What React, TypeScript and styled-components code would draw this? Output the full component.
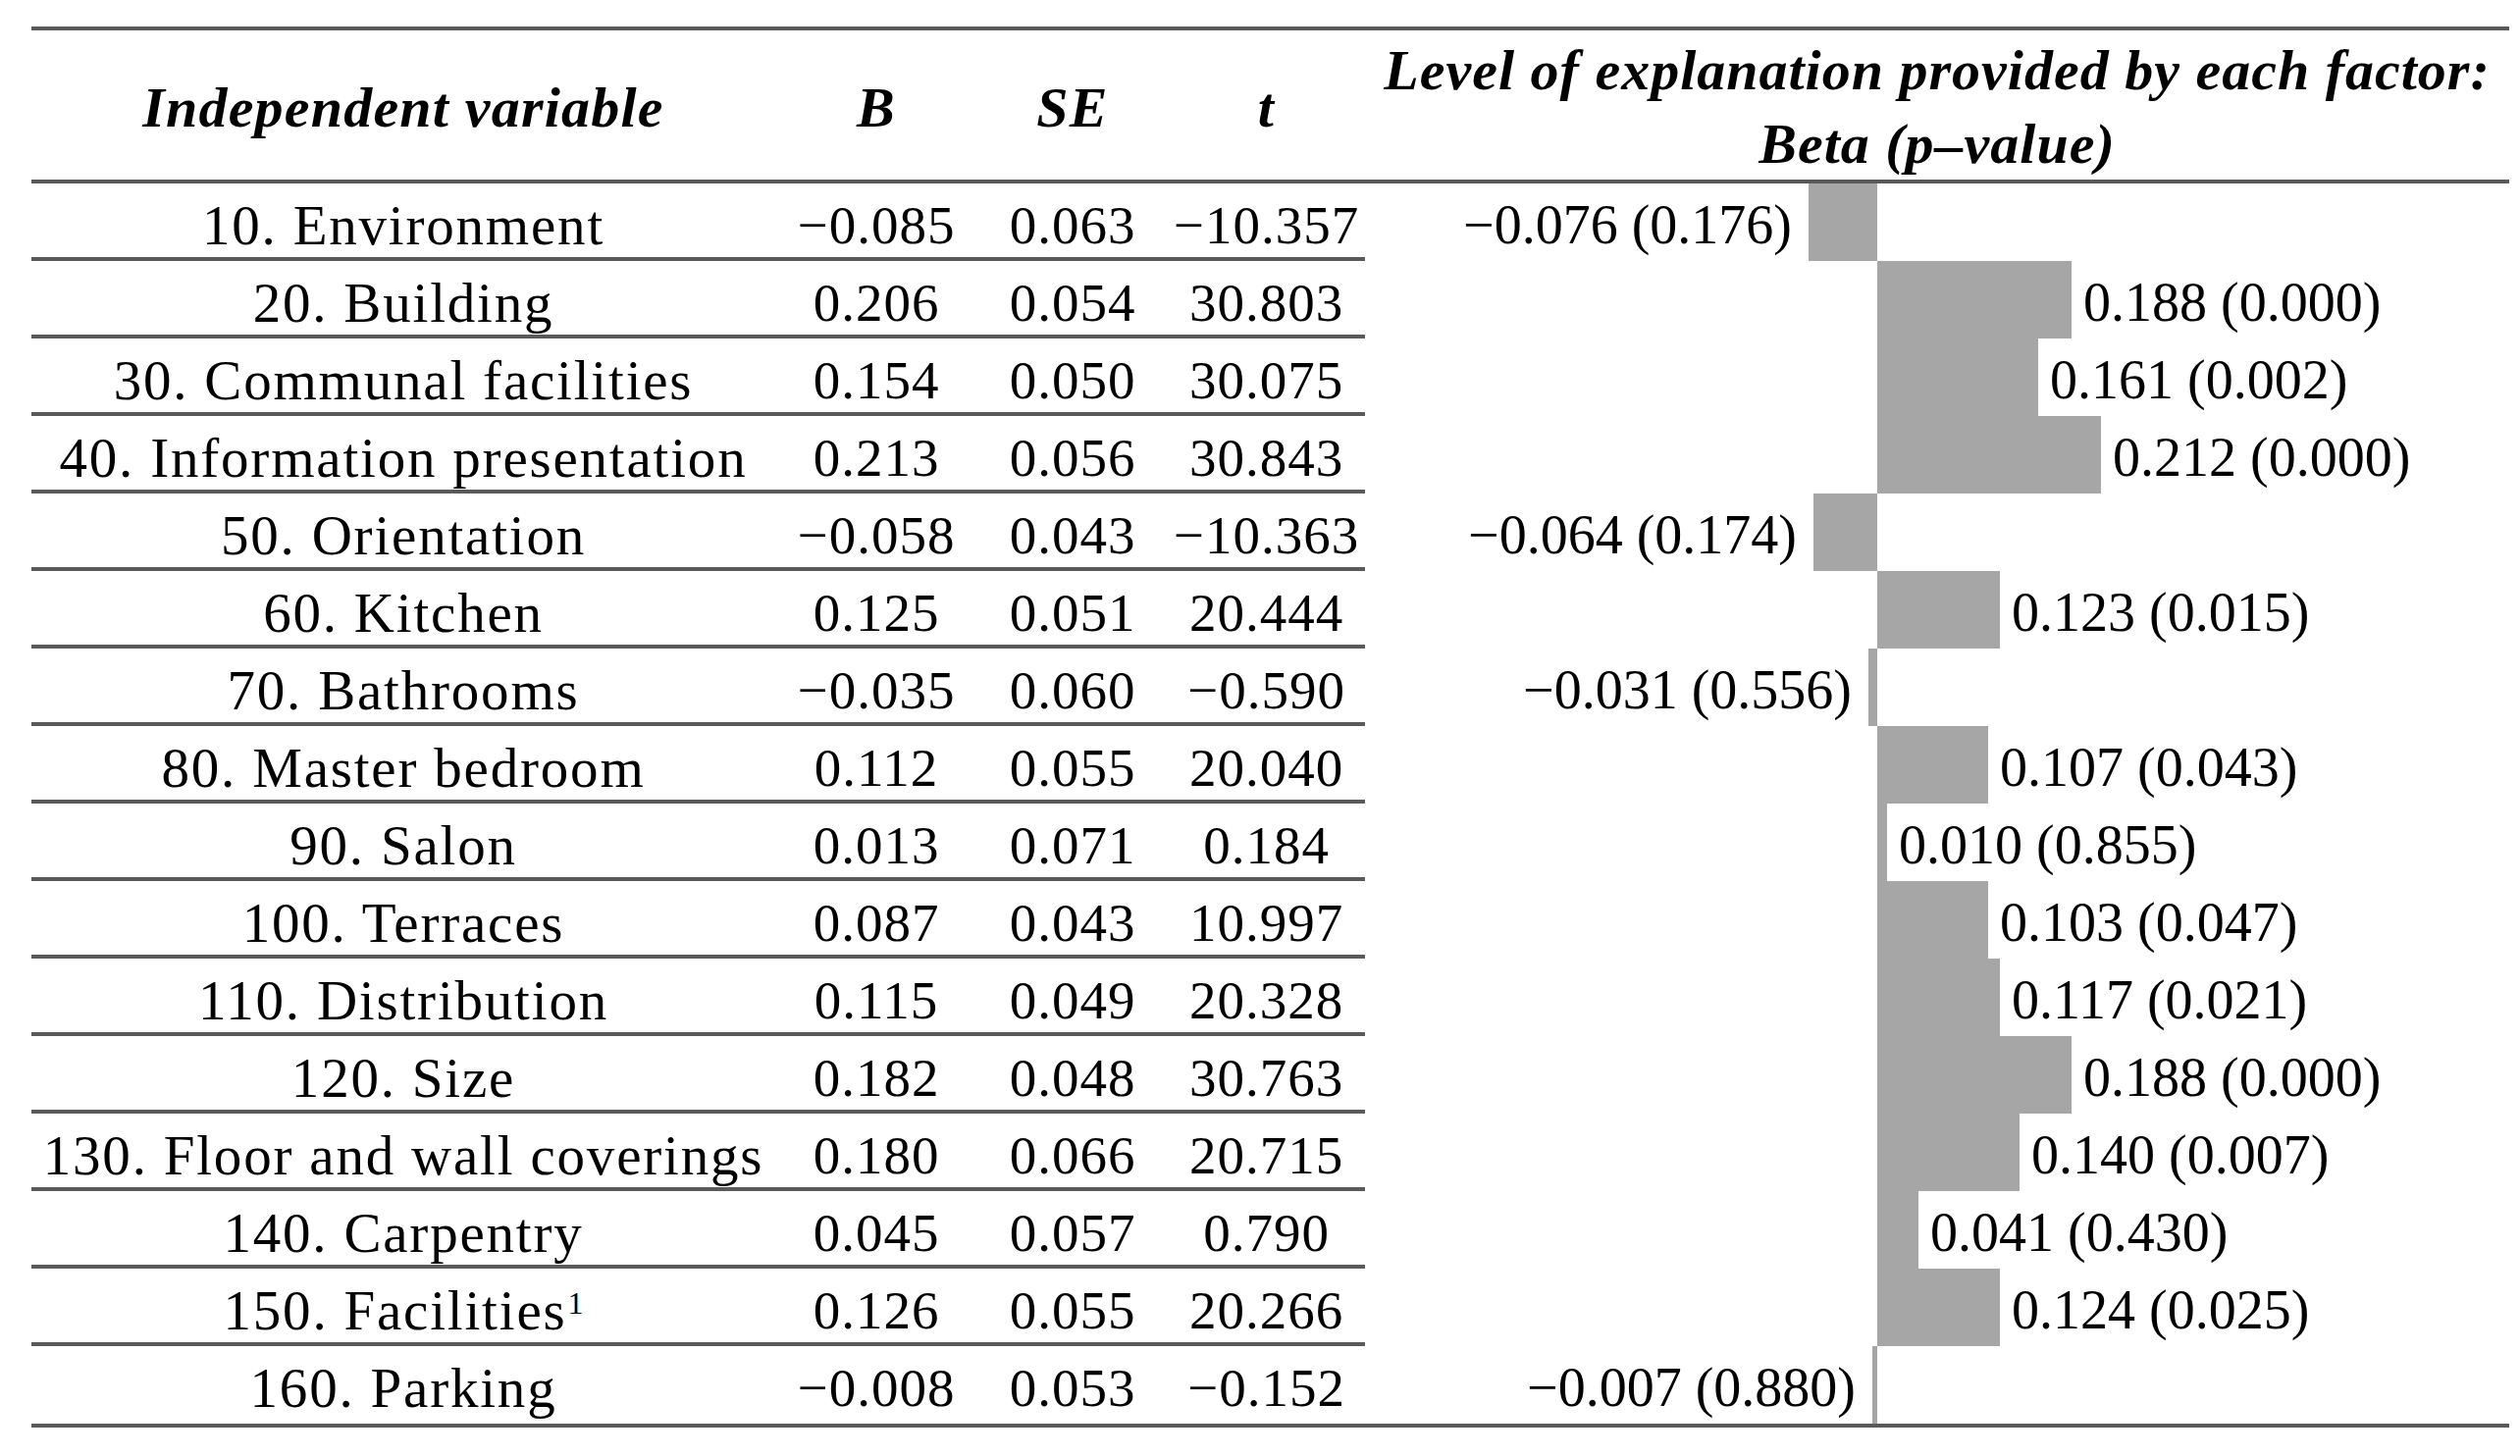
import React from "react";
import styled, { createGlobalStyle } from "styled-components";

const GlobalStyle = createGlobalStyle`
  html, body {
    margin: 0;
    padding: 0;
    background: #ffffff;
  }
  body {
    font-family: "Liberation Serif", "Times New Roman", serif;
    color: #000000;
  }
`;

const RULE = "#5a5a5a";
const COLS = "758px 206px 194px 201px 1166px";

const Page = styled.div`
  padding: 27px 11px 29px 32px;
`;

const Table = styled.div`
  width: 2525px;
  border-top: 4px solid ${RULE};
  border-bottom: 4px solid ${RULE};
`;

const HeaderRow = styled.div`
  display: grid;
  grid-template-columns: ${COLS};
  height: 156px;
  box-sizing: border-box;
  border-bottom: 4px solid ${RULE};
`;

const HeadCell = styled.div`
  display: flex;
  align-items: center;
  justify-content: center;
  padding-top: 4px;
  box-sizing: border-box;
  font-size: 58px;
  font-weight: bold;
  font-style: italic;
  letter-spacing: 1.2px;
  white-space: nowrap;
`;

const HeadStack = styled.div`
  display: flex;
  flex-direction: column;
  align-items: center;
  padding-top: 3px;
  font-size: 58px;
  font-weight: bold;
  font-style: italic;
  letter-spacing: 1px;
  line-height: 75px;
  white-space: nowrap;
`;

const BodyRow = styled.div`
  display: grid;
  grid-template-columns: ${COLS};
  height: 79px;
`;

const Cell = styled.div<{ $last?: boolean; $name?: boolean }>`
  display: flex;
  align-items: center;
  justify-content: center;
  box-sizing: border-box;
  padding-top: 10px;
  border-bottom: 4px solid ${(p) => (p.$last ? "transparent" : RULE)};
  font-size: ${(p) => (p.$name ? "57px" : "55px")};
  letter-spacing: ${(p) => (p.$name ? "1.8px" : "1px")};
  white-space: nowrap;
`;

const NameText = styled.span`
  display: inline-block;
`;

const Sup = styled.sup`
  font-size: 32px;
  letter-spacing: 0;
  vertical-align: 16px;
  line-height: 0;
  margin-left: 1px;
`;

const ChartCell = styled.div`
  display: flex;
  height: 79px;
`;

const NegSide = styled.div`
  width: 522px;
  display: flex;
  justify-content: flex-end;
  align-items: stretch;
`;

const PosSide = styled.div`
  flex: 1;
  display: flex;
  justify-content: flex-start;
  align-items: stretch;
`;

const Bar = styled.div`
  background: #a6a6a6;
  flex: none;
`;

const BarLabel = styled.div<{ $side: "neg" | "pos" }>`
  display: flex;
  align-items: center;
  padding-top: 5px;
  box-sizing: border-box;
  font-size: 56px;
  white-space: nowrap;
  margin-right: ${(p) => (p.$side === "neg" ? "17px" : "0")};
  margin-left: ${(p) => (p.$side === "pos" ? "12px" : "0")};
`;

type Row = {
  name: string;
  sup?: string;
  b: string;
  se: string;
  t: string;
  beta: string;
  p: string;
  bar: number;
};

const rows: Row[] = [
  { name: "10. Environment", b: "−0.085", se: "0.063", t: "−10.357", beta: "−0.076", p: "0.176", bar: -70 },
  { name: "20. Building", b: "0.206", se: "0.054", t: "30.803", beta: "0.188", p: "0.000", bar: 198 },
  { name: "30. Communal facilities", b: "0.154", se: "0.050", t: "30.075", beta: "0.161", p: "0.002", bar: 164 },
  { name: "40. Information presentation", b: "0.213", se: "0.056", t: "30.843", beta: "0.212", p: "0.000", bar: 228 },
  { name: "50. Orientation", b: "−0.058", se: "0.043", t: "−10.363", beta: "−0.064", p: "0.174", bar: -65 },
  { name: "60. Kitchen", b: "0.125", se: "0.051", t: "20.444", beta: "0.123", p: "0.015", bar: 125 },
  { name: "70. Bathrooms", b: "−0.035", se: "0.060", t: "−0.590", beta: "−0.031", p: "0.556", bar: -9 },
  { name: "80. Master bedroom", b: "0.112", se: "0.055", t: "20.040", beta: "0.107", p: "0.043", bar: 113 },
  { name: "90. Salon", b: "0.013", se: "0.071", t: "0.184", beta: "0.010", p: "0.855", bar: 10 },
  { name: "100. Terraces", b: "0.087", se: "0.043", t: "10.997", beta: "0.103", p: "0.047", bar: 113 },
  { name: "110. Distribution", b: "0.115", se: "0.049", t: "20.328", beta: "0.117", p: "0.021", bar: 125 },
  { name: "120. Size", b: "0.182", se: "0.048", t: "30.763", beta: "0.188", p: "0.000", bar: 198 },
  { name: "130. Floor and wall coverings", b: "0.180", se: "0.066", t: "20.715", beta: "0.140", p: "0.007", bar: 145 },
  { name: "140. Carpentry", b: "0.045", se: "0.057", t: "0.790", beta: "0.041", p: "0.430", bar: 42 },
  { name: "150. Facilities", sup: "1", b: "0.126", se: "0.055", t: "20.266", beta: "0.124", p: "0.025", bar: 125 },
  { name: "160. Parking", b: "−0.008", se: "0.053", t: "−0.152", beta: "−0.007", p: "0.880", bar: -5 },
];

const Chart: React.FC<{ row: Row }> = ({ row }) => {
  const label = `${row.beta} (${row.p})`;
  const neg = row.bar < 0;
  return (
    <ChartCell>
      <NegSide>
        {neg && (
          <>
            <BarLabel $side="neg">{label}</BarLabel>
            <Bar style={{ width: `${-row.bar}px` }} />
          </>
        )}
      </NegSide>
      <PosSide>
        {!neg && (
          <>
            <Bar style={{ width: `${row.bar}px` }} />
            <BarLabel $side="pos">{label}</BarLabel>
          </>
        )}
      </PosSide>
    </ChartCell>
  );
};

export default function App() {
  return (
    <>
      <GlobalStyle />
      <Page>
        <Table>
          <HeaderRow>
            <HeadCell>Independent variable</HeadCell>
            <HeadCell>B</HeadCell>
            <HeadCell>SE</HeadCell>
            <HeadCell>t</HeadCell>
            <HeadStack>
              <span>Level of explanation provided by each factor:</span>
              <span>Beta (p–value)</span>
            </HeadStack>
          </HeaderRow>
          {rows.map((r, i) => {
            const last = i === rows.length - 1;
            return (
              <BodyRow key={r.name}>
                <Cell $name $last={last}>
                  <NameText>
                    {r.name}
                    {r.sup && <Sup>{r.sup}</Sup>}
                  </NameText>
                </Cell>
                <Cell $last={last}>{r.b}</Cell>
                <Cell $last={last}>{r.se}</Cell>
                <Cell $last={last}>{r.t}</Cell>
                <Chart row={r} />
              </BodyRow>
            );
          })}
        </Table>
      </Page>
    </>
  );
}
